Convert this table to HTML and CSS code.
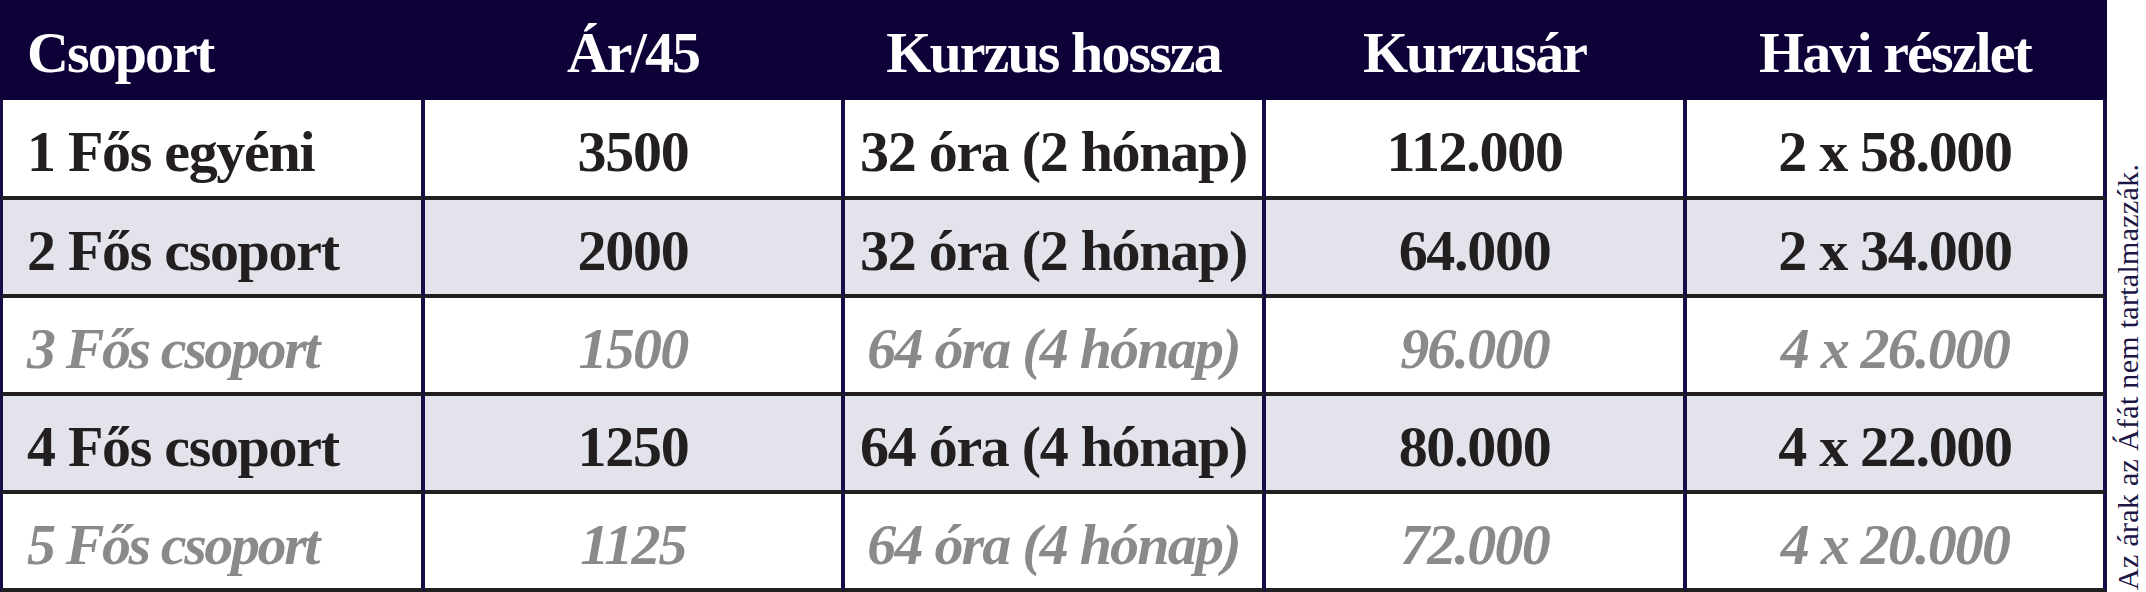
FILE: index.html
```html
<!DOCTYPE html>
<html lang="hu">
<head>
<meta charset="utf-8">
<title>Árak</title>
<link rel="stylesheet" href="styles.css">
</head>
<body>
<div class="page">
  <div class="table">
    <div class="row head">
      <div class="cell first">Csoport</div>
      <div class="cell">Ár/45</div>
      <div class="cell">Kurzus hossza</div>
      <div class="cell">Kurzusár</div>
      <div class="cell">Havi részlet</div>
    </div>
    <div class="row top">
      <div class="cell first">1 Fős egyéni</div>
      <div class="cell">3500</div>
      <div class="cell">32 óra (2 hónap)</div>
      <div class="cell">112.000</div>
      <div class="cell">2 x 58.000</div>
    </div>
    <div class="row alt">
      <div class="cell first">2 Fős csoport</div>
      <div class="cell">2000</div>
      <div class="cell">32 óra (2 hónap)</div>
      <div class="cell">64.000</div>
      <div class="cell">2 x 34.000</div>
    </div>
    <div class="row muted">
      <div class="cell first">3 Fős csoport</div>
      <div class="cell">1500</div>
      <div class="cell">64 óra (4 hónap)</div>
      <div class="cell">96.000</div>
      <div class="cell">4 x 26.000</div>
    </div>
    <div class="row alt">
      <div class="cell first">4 Fős csoport</div>
      <div class="cell">1250</div>
      <div class="cell">64 óra (4 hónap)</div>
      <div class="cell">80.000</div>
      <div class="cell">4 x 22.000</div>
    </div>
    <div class="row muted">
      <div class="cell first">5 Fős csoport</div>
      <div class="cell">1125</div>
      <div class="cell">64 óra (4 hónap)</div>
      <div class="cell">72.000</div>
      <div class="cell">4 x 20.000</div>
    </div>
  </div>
  <div class="note">Az árak az Áfát nem tartalmazzák.</div>
</div>
</body>
</html>
```

FILE: styles.css
```css
* { box-sizing: border-box; }

body {
  margin: 0;
  background: #ffffff;
  font-family: "Liberation Serif", "Times New Roman", serif;
}

.page {
  display: flex;
  width: 2146px;
  height: 592px;
}

.table {
  width: 2107px;
  display: flex;
  flex-direction: column;
}

.row {
  display: grid;
  grid-template-columns: 425px 420px 421px 421px 420px;
  height: 98px;
  background: #ffffff;
  color: #231f20;
}

.row.top { height: 100px; }

.row.alt { background: #e3e3ec; }

.row.muted {
  color: #8a8a8d;
  font-style: italic;
}

.cell {
  display: flex;
  align-items: center;
  justify-content: center;
  padding-top: 6px;
  border-right: 4px solid #170c48;
  border-bottom: 4px solid #231f20;
  font-size: 58px;
  font-weight: bold;
  letter-spacing: -1.3px;
  white-space: nowrap;
}

.row.muted .cell { letter-spacing: -1.8px; }

.row.muted .cell.first { letter-spacing: -2.4px; }

.cell.first {
  justify-content: flex-start;
  border-left: 3px solid #170c48;
  padding-left: 24px;
}

.row.head {
  height: 100px;
  background: #0e0137;
  color: #ffffff;
}

.row.head .cell {
  border-color: #0e0137;
  border-bottom-width: 0;
  padding-top: 5px;
  letter-spacing: -1.9px;
}

.note {
  width: 39px;
  height: 592px;
  writing-mode: vertical-rl;
  transform: rotate(180deg);
  padding-top: 2px;
  padding-right: 4px;
  font-size: 30px;
  letter-spacing: 0.3px;
  color: #1c1747;
  white-space: nowrap;
}
```
